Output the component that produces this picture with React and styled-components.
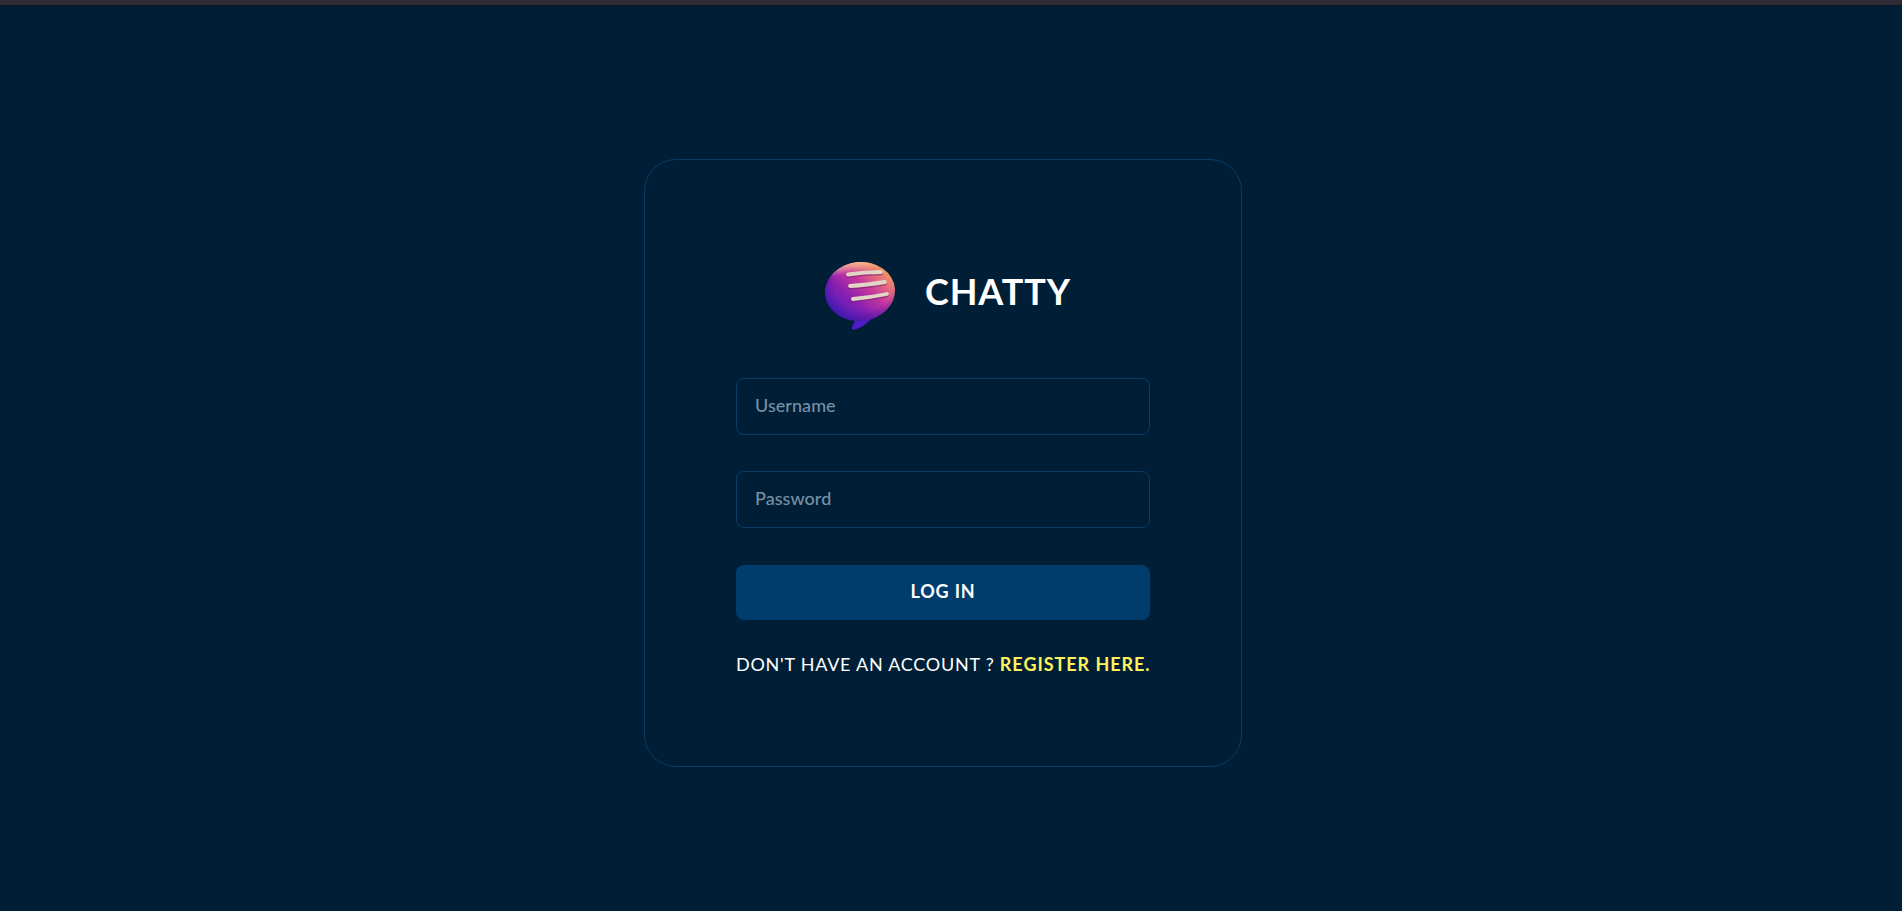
import React from "react";
import styled, { createGlobalStyle } from "styled-components";

const GlobalStyle = createGlobalStyle`
  html, body {
    margin: 0;
    height: 100%;
    background: #001f37;
  }
  body {
    font-family: "Lato", "Liberation Sans", sans-serif;
    overflow: hidden;
  }
`;

const Page = styled.div`
  height: 911px;
  box-sizing: border-box;
  border-top: 5px solid #2f2b35;
  display: flex;
  flex-direction: column;
`;

const TopShadow = styled.div`
  height: 1px;
  background: #0c1420;
`;

const Main = styled.main`
  display: flex;
  justify-content: center;
  padding: 153px 16px 0 0;
`;

const Card = styled.form`
  box-sizing: border-box;
  width: 598px;
  height: 608px;
  padding: 101px 91px 0;
  border: 1px solid #0a3c66;
  border-radius: 32px;
  display: flex;
  flex-direction: column;
`;

const Brand = styled.div`
  display: flex;
  align-items: center;
  justify-content: center;
  gap: 29px;
  padding-left: 9px;
  margin-bottom: 47px;
`;

const Title = styled.h1`
  margin: 0 0 9px;
  color: #fff;
  font-size: 36px;
  line-height: 61px;
  font-weight: 700;
  letter-spacing: 0.9px;
`;

const Field = styled.input`
  box-sizing: border-box;
  width: 100%;
  height: 57px;
  margin-bottom: 36px;
  padding: 0 18px 4px;
  background: transparent;
  border: 1px solid #0a3c66;
  border-radius: 8px;
  outline: none;
  color: #fff;
  font-family: inherit;
  font-size: 18px;
  font-weight: 500;
  letter-spacing: 0.05px;

  &::placeholder {
    color: #7890a4;
    opacity: 1;
  }
`;

const Submit = styled.button`
  height: 55px;
  margin-top: 1px;
  padding: 0 0 4px;
  border: none;
  border-radius: 8px;
  background: #003c6c;
  color: #fff;
  font-family: inherit;
  font-size: 18px;
  font-weight: 700;
  letter-spacing: 0.85px;
`;

const Footer = styled.p`
  margin: 33px 0 0;
  color: #fff;
  font-size: 18px;
  line-height: 22px;
  white-space: nowrap;
  letter-spacing: 0.75px;
`;

const RegisterLink = styled.a`
  color: #fff35c;
  font-weight: 700;
  letter-spacing: 0.95px;
  text-decoration: none;
`;

function Logo() {
  return (
    <svg width="72" height="70" viewBox="0 0 72 70" aria-label="Chatty logo">
      <defs>
        <linearGradient id="bubble" x1="1" y1="0.22" x2="0.16" y2="0.9">
          <stop offset="0" stopColor="#f2a552" />
          <stop offset="0.2" stopColor="#e8707a" />
          <stop offset="0.42" stopColor="#c636a0" />
          <stop offset="0.68" stopColor="#8a20b0" />
          <stop offset="1" stopColor="#4a1fc0" />
        </linearGradient>
        <radialGradient id="rim" cx="0.56" cy="0.4" r="0.64">
          <stop offset="0.66" stopColor="#3a10a0" stopOpacity="0" />
          <stop offset="1" stopColor="#3a10a0" stopOpacity="0.65" />
        </radialGradient>
        <linearGradient id="glow" x1="0.4" y1="0" x2="0.5" y2="1">
          <stop offset="0" stopColor="#ffd08c" stopOpacity="0.8" />
          <stop offset="0.18" stopColor="#ffd9a0" stopOpacity="0" />
        </linearGradient>
      </defs>
      <path d="M29 52 L31 60 Q26 68 29 69 Q40 67 50 55 Z" fill="#4a1ec4" />
      <g transform="rotate(-5 36 30)">
        <ellipse cx="36" cy="30.5" rx="35" ry="29.5" fill="url(#bubble)" />
        <ellipse cx="36" cy="30.5" rx="35" ry="29.5" fill="url(#rim)" />
        <ellipse cx="36" cy="30.5" rx="35" ry="29.5" fill="url(#glow)" />
      </g>
      <g fill="none" strokeLinecap="round" strokeWidth="3.8">
        <g stroke="#6f2368" strokeOpacity="0.55" transform="translate(0 1.5)">
          <path d="M24 13.5 Q40 11 57 11" />
          <path d="M26 25 Q42 24 61 21" />
          <path d="M29 38 Q46 36.5 63 33" />
        </g>
        <g stroke="#e3d5c6">
          <path d="M24 13.5 Q40 11 57 11" />
          <path d="M26 25 Q42 24 61 21" />
          <path d="M29 38 Q46 36.5 63 33" />
        </g>
      </g>
    </svg>
  );
}

export default function App() {
  return (
    <>
      <GlobalStyle />
      <Page>
        <TopShadow />
        <Main>
          <Card onSubmit={(e) => e.preventDefault()}>
            <Brand>
              <Logo />
              <Title>CHATTY</Title>
            </Brand>
            <Field type="text" placeholder="Username" />
            <Field type="password" placeholder="Password" />
            <Submit type="submit">LOG IN</Submit>
            <Footer>
              DON'T HAVE AN ACCOUNT ? <RegisterLink href="#">REGISTER HERE.</RegisterLink>
            </Footer>
          </Card>
        </Main>
      </Page>
    </>
  );
}
